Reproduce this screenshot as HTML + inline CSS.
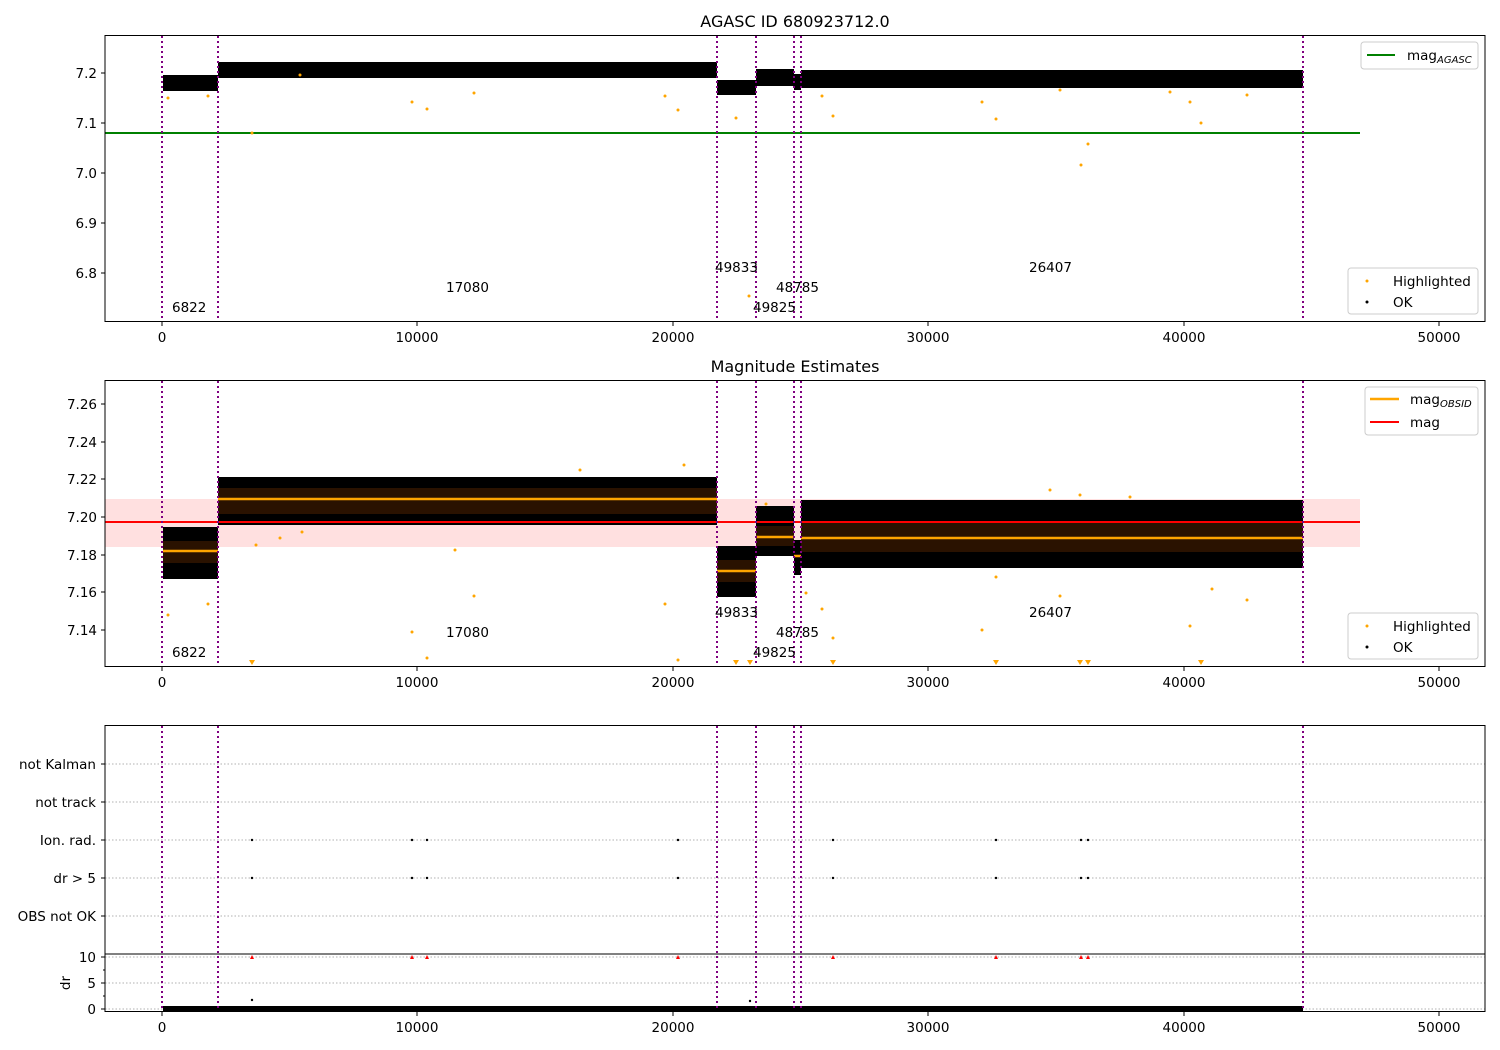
<!DOCTYPE html>
<html><head><meta charset="utf-8"><style>
html,body{margin:0;padding:0;background:#fff;}
svg{display:block;font-family:"DejaVu Sans","Liberation Sans",sans-serif;}
</style></head><body>
<svg width="1500" height="1050" viewBox="0 0 1500 1050" xmlns="http://www.w3.org/2000/svg">
<rect width="1500" height="1050" fill="#fff"/>
<g font-size="13.5" fill="#000">
<text x="795" y="27" text-anchor="middle" font-size="16">AGASC ID 680923712.0</text>
<text x="795" y="372" text-anchor="middle" font-size="16">Magnitude Estimates</text>
</g>

<!-- Panel 1 -->
<g>
<line x1="105" y1="133" x2="1360" y2="133" stroke="#008000" stroke-width="2"/>
<rect x="163" y="75" width="55" height="16" fill="#000"/>
<rect x="218" y="62" width="499" height="16" fill="#000"/>
<rect x="717" y="80" width="39" height="15" fill="#000"/>
<rect x="756" y="69" width="38" height="17" fill="#000"/>
<rect x="794" y="74" width="7" height="16" fill="#000"/>
<rect x="801" y="70" width="502" height="18" fill="#000"/>
<g fill="#ffa500">
<circle cx="168" cy="98" r="1.5"/><circle cx="208" cy="96" r="1.5"/><circle cx="252" cy="133" r="1.5"/><circle cx="412" cy="102" r="1.5"/><circle cx="427" cy="109" r="1.5"/><circle cx="474" cy="93" r="1.5"/><circle cx="665" cy="96" r="1.5"/><circle cx="678" cy="110" r="1.5"/><circle cx="736" cy="118" r="1.5"/><circle cx="749" cy="296" r="1.5"/><circle cx="822" cy="96" r="1.5"/><circle cx="833" cy="116" r="1.5"/><circle cx="982" cy="102" r="1.5"/><circle cx="996" cy="119" r="1.5"/><circle cx="1081" cy="165" r="1.5"/><circle cx="1088" cy="144" r="1.5"/><circle cx="1170" cy="92" r="1.5"/><circle cx="1190" cy="102" r="1.5"/><circle cx="1201" cy="123" r="1.5"/><circle cx="1247" cy="95" r="1.5"/><circle cx="1060" cy="90" r="1.5"/><circle cx="300" cy="75" r="1.5"/>
</g>
<g stroke="#800080" stroke-width="2" stroke-dasharray="2,3">
<line x1="162" y1="36" x2="162" y2="321"/><line x1="218" y1="36" x2="218" y2="321"/><line x1="717" y1="36" x2="717" y2="321"/><line x1="756" y1="36" x2="756" y2="321"/><line x1="794" y1="36" x2="794" y2="321"/><line x1="801" y1="36" x2="801" y2="321"/><line x1="1303" y1="36" x2="1303" y2="321"/>
</g>
<g font-size="13.5">
<text x="172" y="312">6822</text><text x="446" y="292">17080</text><text x="715" y="272">49833</text><text x="776" y="292">48785</text><text x="753" y="312">49825</text><text x="1029" y="272">26407</text>
</g>
<rect x="105" y="35.5" width="1380" height="286" fill="none" stroke="#000" stroke-width="1"/>
<g stroke="#000"><line x1="101" y1="73" x2="105" y2="73"/><line x1="101" y1="123" x2="105" y2="123"/><line x1="101" y1="173" x2="105" y2="173"/><line x1="101" y1="223" x2="105" y2="223"/><line x1="101" y1="273" x2="105" y2="273"/>
<line x1="162" y1="322" x2="162" y2="326"/><line x1="417" y1="322" x2="417" y2="326"/><line x1="673" y1="322" x2="673" y2="326"/><line x1="928" y1="322" x2="928" y2="326"/><line x1="1184" y1="322" x2="1184" y2="326"/><line x1="1439" y1="322" x2="1439" y2="326"/></g>
<g font-size="13.5" text-anchor="end"><text x="97" y="78">7.2</text><text x="97" y="128">7.1</text><text x="97" y="178">7.0</text><text x="97" y="228">6.9</text><text x="97" y="278">6.8</text></g>
<g font-size="13.5" text-anchor="middle"><text x="162" y="342">0</text><text x="417" y="342">10000</text><text x="673" y="342">20000</text><text x="928" y="342">30000</text><text x="1184" y="342">40000</text><text x="1439" y="342">50000</text></g>
<rect x="1361" y="42" width="117" height="27" rx="3" fill="#fff" stroke="#ccc"/>
<line x1="1367" y1="55" x2="1395" y2="55" stroke="#008000" stroke-width="2"/>
<text x="1407" y="60" font-size="13.5">mag<tspan font-size="10" font-style="italic" dy="3">AGASC</tspan></text>
<rect x="1348" y="268" width="130" height="46" rx="3" fill="#fff" stroke="#ccc"/>
<circle cx="1367" cy="281" r="1.5" fill="#ffa500"/><circle cx="1367" cy="302" r="1.5" fill="#000"/>
<text x="1393" y="286" font-size="13.5">Highlighted</text><text x="1393" y="307" font-size="13.5">OK</text>
</g>

<!-- Panel 2 -->
<g>
<rect x="105" y="499" width="1255" height="48" fill="#ffdddd" opacity="0.9"/>
<rect x="163" y="527" width="55" height="52" fill="#000"/>
<rect x="163" y="541" width="55" height="22" fill="#2a1200"/>
<rect x="218" y="477" width="499" height="48" fill="#000"/>
<rect x="218" y="488" width="499" height="26" fill="#2a1200"/>
<rect x="717" y="546" width="39" height="51" fill="#000"/>
<rect x="717" y="560" width="39" height="22" fill="#2a1200"/>
<rect x="756" y="506" width="38" height="50" fill="#000"/>
<rect x="756" y="526" width="38" height="20" fill="#2a1200"/>
<rect x="794" y="540" width="7" height="35" fill="#000"/>
<rect x="801" y="500" width="502" height="68" fill="#000"/>
<rect x="801" y="522" width="502" height="30" fill="#2a1200"/>
<g stroke="#ffa500" stroke-width="2.5">
<line x1="163" y1="551" x2="218" y2="551"/><line x1="218" y1="499" x2="717" y2="499"/><line x1="717" y1="571" x2="756" y2="571"/><line x1="756" y1="537" x2="794" y2="537"/><line x1="794" y1="556" x2="801" y2="556"/><line x1="801" y1="538" x2="1303" y2="538"/>
</g>
<line x1="105" y1="522" x2="1360" y2="522" stroke="#ff0000" stroke-width="2"/>
<g fill="#ffa500">
<circle cx="168" cy="615" r="1.5"/><circle cx="208" cy="604" r="1.5"/><circle cx="256" cy="545" r="1.5"/><circle cx="280" cy="538" r="1.5"/><circle cx="302" cy="532" r="1.5"/><circle cx="412" cy="632" r="1.5"/><circle cx="427" cy="658" r="1.5"/><circle cx="455" cy="550" r="1.5"/><circle cx="474" cy="596" r="1.5"/><circle cx="580" cy="470" r="1.5"/><circle cx="665" cy="604" r="1.5"/><circle cx="678" cy="660" r="1.5"/><circle cx="684" cy="465" r="1.5"/><circle cx="766" cy="504" r="1.5"/><circle cx="806" cy="593" r="1.5"/><circle cx="822" cy="609" r="1.5"/><circle cx="833" cy="638" r="1.5"/><circle cx="982" cy="630" r="1.5"/><circle cx="996" cy="577" r="1.5"/><circle cx="1060" cy="596" r="1.5"/><circle cx="1190" cy="626" r="1.5"/><circle cx="1212" cy="589" r="1.5"/><circle cx="1247" cy="600" r="1.5"/><circle cx="1050" cy="490" r="1.5"/><circle cx="1080" cy="495" r="1.5"/><circle cx="1130" cy="497" r="1.5"/>
</g>
<g fill="#ffa500"><path d="M249 660h6l-3 5z"/><path d="M733 660h6l-3 5z"/><path d="M747 660h6l-3 5z"/><path d="M830 660h6l-3 5z"/><path d="M993 660h6l-3 5z"/><path d="M1077 660h6l-3 5z"/><path d="M1085 660h6l-3 5z"/><path d="M1198 660h6l-3 5z"/></g>
<g stroke="#800080" stroke-width="2" stroke-dasharray="2,3">
<line x1="162" y1="381" x2="162" y2="666"/><line x1="218" y1="381" x2="218" y2="666"/><line x1="717" y1="381" x2="717" y2="666"/><line x1="756" y1="381" x2="756" y2="666"/><line x1="794" y1="381" x2="794" y2="666"/><line x1="801" y1="381" x2="801" y2="666"/><line x1="1303" y1="381" x2="1303" y2="666"/>
</g>
<g font-size="13.5">
<text x="172" y="657">6822</text><text x="446" y="637">17080</text><text x="715" y="617">49833</text><text x="776" y="637">48785</text><text x="753" y="657">49825</text><text x="1029" y="617">26407</text>
</g>
<rect x="105" y="380.5" width="1380" height="286" fill="none" stroke="#000"/>
<g stroke="#000"><line x1="101" y1="404" x2="105" y2="404"/><line x1="101" y1="442" x2="105" y2="442"/><line x1="101" y1="479" x2="105" y2="479"/><line x1="101" y1="517" x2="105" y2="517"/><line x1="101" y1="555" x2="105" y2="555"/><line x1="101" y1="592" x2="105" y2="592"/><line x1="101" y1="630" x2="105" y2="630"/>
<line x1="162" y1="667" x2="162" y2="671"/><line x1="417" y1="667" x2="417" y2="671"/><line x1="673" y1="667" x2="673" y2="671"/><line x1="928" y1="667" x2="928" y2="671"/><line x1="1184" y1="667" x2="1184" y2="671"/><line x1="1439" y1="667" x2="1439" y2="671"/></g>
<g font-size="13.5" text-anchor="end"><text x="97" y="409">7.26</text><text x="97" y="447">7.24</text><text x="97" y="484">7.22</text><text x="97" y="522">7.20</text><text x="97" y="560">7.18</text><text x="97" y="597">7.16</text><text x="97" y="635">7.14</text></g>
<g font-size="13.5" text-anchor="middle"><text x="162" y="687">0</text><text x="417" y="687">10000</text><text x="673" y="687">20000</text><text x="928" y="687">30000</text><text x="1184" y="687">40000</text><text x="1439" y="687">50000</text></g>
<rect x="1365" y="387" width="113" height="48" rx="3" fill="#fff" stroke="#ccc"/>
<line x1="1370" y1="399" x2="1399" y2="399" stroke="#ffa500" stroke-width="2.5"/>
<line x1="1370" y1="422" x2="1399" y2="422" stroke="#ff0000" stroke-width="2"/>
<text x="1410" y="404" font-size="13.5">mag<tspan font-size="10" font-style="italic" dy="3">OBSID</tspan></text>
<text x="1410" y="427" font-size="13.5">mag</text>
<rect x="1348" y="613" width="130" height="46" rx="3" fill="#fff" stroke="#ccc"/>
<circle cx="1367" cy="626" r="1.5" fill="#ffa500"/><circle cx="1367" cy="647" r="1.5" fill="#000"/>
<text x="1393" y="631" font-size="13.5">Highlighted</text><text x="1393" y="652" font-size="13.5">OK</text>
</g>

<!-- Panel 3 -->
<g>
<g stroke="#b0b0b0" stroke-dasharray="1.5,2" stroke-width="1">
<line x1="105" y1="764" x2="1485" y2="764"/><line x1="105" y1="802" x2="1485" y2="802"/><line x1="105" y1="840" x2="1485" y2="840"/><line x1="105" y1="878" x2="1485" y2="878"/><line x1="105" y1="916" x2="1485" y2="916"/>
<line x1="105" y1="957" x2="1485" y2="957"/><line x1="105" y1="983" x2="1485" y2="983"/><line x1="105" y1="1009" x2="1485" y2="1009"/>
</g>
<g fill="#000">
<circle cx="252" cy="840" r="1.2"/><circle cx="412" cy="840" r="1.2"/><circle cx="427" cy="840" r="1.2"/><circle cx="678" cy="840" r="1.2"/><circle cx="833" cy="840" r="1.2"/><circle cx="996" cy="840" r="1.2"/><circle cx="1081" cy="840" r="1.2"/><circle cx="1088" cy="840" r="1.2"/>
<circle cx="252" cy="878" r="1.2"/><circle cx="412" cy="878" r="1.2"/><circle cx="427" cy="878" r="1.2"/><circle cx="678" cy="878" r="1.2"/><circle cx="833" cy="878" r="1.2"/><circle cx="996" cy="878" r="1.2"/><circle cx="1081" cy="878" r="1.2"/><circle cx="1088" cy="878" r="1.2"/>
<circle cx="252" cy="1000" r="1.2"/><circle cx="750" cy="1001" r="1.2"/>
</g>
<g fill="#ff0000"><path d="M250 959l2-4 2 4z"/><path d="M410 959l2-4 2 4z"/><path d="M425 959l2-4 2 4z"/><path d="M676 959l2-4 2 4z"/><path d="M831 959l2-4 2 4z"/><path d="M994 959l2-4 2 4z"/><path d="M1079 959l2-4 2 4z"/><path d="M1086 959l2-4 2 4z"/></g>
<rect x="163" y="1006" width="1140" height="5" fill="#000"/>
<g stroke="#800080" stroke-width="2" stroke-dasharray="2,3">
<line x1="162" y1="726" x2="162" y2="1011"/><line x1="218" y1="726" x2="218" y2="1011"/><line x1="717" y1="726" x2="717" y2="1011"/><line x1="756" y1="726" x2="756" y2="1011"/><line x1="794" y1="726" x2="794" y2="1011"/><line x1="801" y1="726" x2="801" y2="1011"/><line x1="1303" y1="726" x2="1303" y2="1011"/>
</g>
<rect x="105" y="725.5" width="1380" height="286" fill="none" stroke="#000"/>
<line x1="105" y1="954" x2="1485" y2="954" stroke="#000"/>
<g stroke="#000"><line x1="101" y1="764" x2="105" y2="764"/><line x1="101" y1="802" x2="105" y2="802"/><line x1="101" y1="840" x2="105" y2="840"/><line x1="101" y1="878" x2="105" y2="878"/><line x1="101" y1="916" x2="105" y2="916"/>
<line x1="101" y1="957" x2="105" y2="957"/><line x1="101" y1="983" x2="105" y2="983"/><line x1="101" y1="1009" x2="105" y2="1009"/>
<line x1="103" y1="970" x2="105" y2="970"/><line x1="103" y1="996" x2="105" y2="996"/>
<line x1="162" y1="1012" x2="162" y2="1016"/><line x1="417" y1="1012" x2="417" y2="1016"/><line x1="673" y1="1012" x2="673" y2="1016"/><line x1="928" y1="1012" x2="928" y2="1016"/><line x1="1184" y1="1012" x2="1184" y2="1016"/><line x1="1439" y1="1012" x2="1439" y2="1016"/></g>
<g font-size="13.5" text-anchor="end"><text x="96" y="769">not Kalman</text><text x="96" y="807">not track</text><text x="96" y="845">Ion. rad.</text><text x="96" y="883">dr &gt; 5</text><text x="96" y="921">OBS not OK</text>
<text x="96" y="962">10</text><text x="96" y="988">5</text><text x="96" y="1014">0</text></g>
<text transform="translate(70,983) rotate(-90)" font-size="13.5" text-anchor="middle">dr</text>
<g font-size="13.5" text-anchor="middle"><text x="162" y="1032">0</text><text x="417" y="1032">10000</text><text x="673" y="1032">20000</text><text x="928" y="1032">30000</text><text x="1184" y="1032">40000</text><text x="1439" y="1032">50000</text></g>
</g>
</svg>
</body></html>
